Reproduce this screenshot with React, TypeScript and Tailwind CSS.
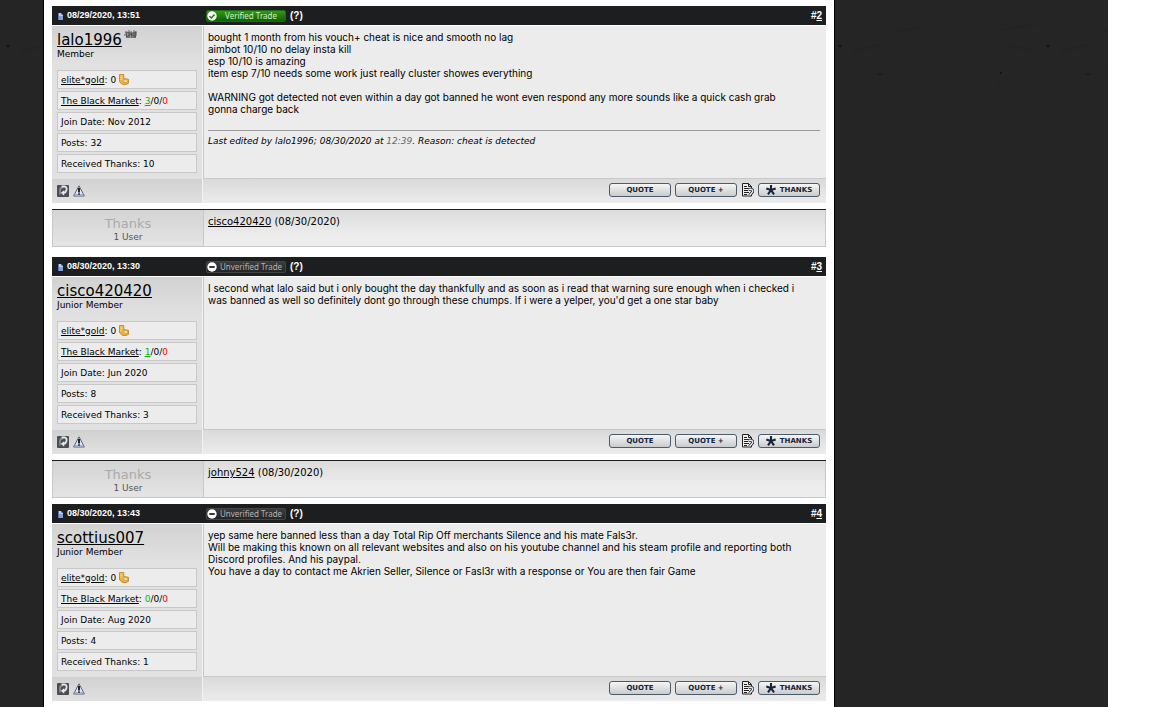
import React from 'react'

type Post = {
  id: number
  date: string
  verified: boolean
  user: string
  rank: string
  crowd?: boolean
  market: [number, number, number]
  joined: string
  posts: number
  received: number
  body: React.ReactNode
  thanks?: string
}

const posts: Post[] = [
  {
    id: 2,
    date: '08/29/2020, 13:51',
    verified: true,
    user: 'lalo1996',
    rank: 'Member',
    crowd: true,
    market: [3, 0, 0],
    joined: 'Nov 2012',
    posts: 32,
    received: 10,
    thanks: 'cisco420420',
    body: (
      <>
        <p>bought 1 month from his vouch+ cheat is nice and smooth no lag</p>
        <p>aimbot 10/10 no delay insta kill</p>
        <p>esp 10/10 is amazing</p>
        <p>item esp 7/10 needs some work just really cluster showes everything</p>
        <p className="mt-3">
          WARNING got detected not even within a day got banned he wont even respond any more sounds like a quick cash
          grab
          <br />
          gonna charge back
        </p>
        <hr className="mt-[15px] mb-1 border-[#999]" />
        <p className="font-['DejaVu_Sans',Verdana,sans-serif] text-[9px] italic">
          Last edited by lalo1996; 08/30/2020 at <span className="text-[#666]">12:39</span>. Reason: cheat is detected
        </p>
      </>
    ),
  },
  {
    id: 3,
    date: '08/30/2020, 13:30',
    verified: false,
    user: 'cisco420420',
    rank: 'Junior Member',
    market: [1, 0, 0],
    joined: 'Jun 2020',
    posts: 8,
    received: 3,
    thanks: 'johny524',
    body: (
      <p>
        I second what lalo said but i only bought the day thankfully and as soon as i read that warning sure enough when
        i checked i
        <br />
        was banned as well so definitely dont go through these chumps. If i were a yelper, you'd get a one star baby
      </p>
    ),
  },
  {
    id: 4,
    date: '08/30/2020, 13:43',
    verified: false,
    user: 'scottius007',
    rank: 'Junior Member',
    market: [0, 0, 0],
    joined: 'Aug 2020',
    posts: 4,
    received: 1,
    body: (
      <>
        <p>yep same here banned less than a day Total Rip Off merchants Silence and his mate Fals3r.</p>
        <p>
          Will be making this known on all relevant websites and also on his youtube channel and his steam profile and
          reporting both
          <br />
          Discord profiles. And his paypal.
        </p>
        <p>You have a day to contact me Akrien Seller, Silence or Fasl3r with a response or You are then fair Game</p>
      </>
    ),
  },
]

const PageIcon = () => (
  <svg width="5" height="7" viewBox="0 0 5 7" className="mt-0.5">
    <path d="M0 0h3l2 2v5H0z" fill="#7f9fd8" />
    <path d="M0 0h3v2h2v1H0z" fill="#b9cdf3" />
    <path d="M0 0h1v7H0z" fill="#5d78b4" />
  </svg>
)

const CoinsIcon = () => (
  <svg width="10" height="11" viewBox="0 0 10 11">
    <path d="M.5.5h4.300v4L9.500 5.300V9.300L7 10.500H3.500L.5 7.800z" fill="#eab140" stroke="#c08a2c" strokeWidth=".9" />
    <path d="M1.200 2h2.500M1.200 3.700h2.500M1.200 5.400h2" stroke="#fbe09a" strokeWidth=".8" />
    <path d="M4.800 5.500h3.600v3H4.800z" fill="#fbdf92" stroke="#c08a2c" strokeWidth=".5" />
  </svg>
)

const CrowdIcon = () => (
  <svg width="14" height="9" viewBox="0 0 14 9" className="ml-0.5">
    <path
      d="M1 3h12M0 5h13M2 7h10M2 1l1 7M5 0v8M7 1l1 7M10 0v8M12 1l-1 7M3 2l9 5M2 7l10-5"
      stroke="#4d4d4d"
      strokeWidth=".9"
      fill="none"
    />
  </svg>
)

const ReputationIcon = () => (
  <svg width="12" height="12" viewBox="0 0 12 12">
    <rect width="12" height="12" rx="1" fill="#4b4f55" />
    <path d="M3 9.500V5Q3 2.500 6 2.500" fill="none" stroke="#8d9399" strokeWidth="1.600" />
    <path d="M4.500 1.500H8Q10 2 9.500 5 9 7.500 6.500 8" fill="none" stroke="#e6e9ec" strokeWidth="1.800" />
    <path d="M7.200 5.200 3.800 7.800 7.200 10.800z" fill="#e6e9ec" />
  </svg>
)

const ReportIcon = () => (
  <svg width="12" height="12" viewBox="0 0 12 12">
    <path d="M6 .8 11.400 11H.6z" fill="#dce7f7" stroke="#59616f" strokeWidth="1" strokeLinejoin="round" />
    <path d="M2 9h8l.8 1.600H1.200z" fill="#9db6dc" />
    <path d="M6 3v4.500" stroke="#111" strokeWidth="1.800" />
    <path d="M5.200 8.300h1.600v1.400H5.200z" fill="#111" />
  </svg>
)

const MultiQuoteIcon = () => (
  <svg width="12" height="14" viewBox="0 0 12 14">
    <path d="M.5.5h6l3 3v9.500h-9z" fill="#eee" stroke="#222" />
    <path d="M6.500.5v3h3" fill="none" stroke="#222" />
    <path d="M2 3.500h3M2 5.500h5M2 7.500h4M2 9.500h5M2 11.500h3" stroke="#222" />
    <path d="M6.500 6.500c4-1 5 1.500 3.500 3L7.500 12.500" fill="none" stroke="#222" strokeWidth="3" />
    <path d="M6.500 6.500c4-1 5 1.500 3.500 3L7.500 12.500" fill="none" stroke="#e4e8f0" strokeWidth="1.400" />
  </svg>
)

const StarIcon = () => (
  <svg width="10" height="10" viewBox="0 0 10 10">
    <path d="M5 5V0M5 5 .3 3.500M5 5l4.700-1.500M5 5 2 9.300M5 5l3 4.300" stroke="#15243a" strokeWidth="2.100" />
  </svg>
)

const TradeBadge = ({ verified }: { verified: boolean }) => (
  <span
    className={
      verified
        ? 'flex h-3 w-20 items-center rounded-xs border border-[#1c6d0c] bg-linear-to-b from-[#2f9a15] to-[#0f6200] text-[#d3eccb]'
        : 'flex h-3 w-20 items-center rounded-xs border border-[#444] bg-linear-to-b from-[#393b3c] to-[#242526] text-[#b5b5b5]'
    }
  >
    <svg width="10" height="10" viewBox="0 0 10 10">
      <circle cx="5" cy="5" r="4.700" fill="#fff" />
      {verified ? (
        <path d="M2.500 5.200 4.300 7l3.200-3.600" fill="none" stroke="#1d7d0a" strokeWidth="1.500" />
      ) : (
        <path d="M2.300 5h5.400" stroke="#222" strokeWidth="1.800" />
      )}
    </svg>
    <span className="flex-1 text-center font-['Noto_Sans',sans-serif] text-[8px] leading-[10px] font-normal whitespace-nowrap">
      {verified ? 'Verified Trade' : 'Unverified Trade'}
    </span>
  </span>
)

const InfoRow = ({ children }: { children: React.ReactNode }) => (
  <li className="flex h-[19px] items-center border border-[#c8c8c8] bg-[#ececec] px-[3px] whitespace-pre">{children}</li>
)

const ActionButton = ({ children }: { children: React.ReactNode }) => (
  <button className="flex h-3.5 w-[62px] items-center justify-center gap-1 rounded-[3px] border border-[#4a5b6b] bg-linear-to-b from-[#f6f6f6] to-[#c9cbcd] text-[7px] leading-none font-bold text-[#15243a]">
    {children}
  </button>
)

const PostCard = ({ post }: { post: Post }) => (
  <article>
    {/* Title bar */}
    <header className="grid h-[19px] grid-cols-[150px_1fr] items-center bg-[#1c1e20] font-['Liberation_Sans',Arial,sans-serif] text-[9px] font-bold text-white">
      <span className="flex items-center gap-1 pl-1.5">
        <PageIcon />
        {post.date}
      </span>
      <span className="flex items-center gap-1 pr-1 pl-1">
        <TradeBadge verified={post.verified} />
        <a href="#help" className="text-[10px]">(?)</a>
        <span className="ml-auto text-[10px]">
          #<a href={'#post' + post.id} className="underline">{post.id}</a>
        </span>
      </span>
    </header>

    {/* Author and message */}
    <div className="mt-px grid min-h-[153px] grid-cols-[150px_1fr] gap-px bg-[#f2f2f2]">
      <div className="bg-linear-to-b from-[#d2d2d2] to-[#e1e1e1] to-25% px-[5px] text-[9px] leading-3">
        <div className="flex h-[22px] items-start pt-1">
          <a href={'#' + post.user} className="text-[15px] leading-5 underline">{post.user}</a>
          {post.crowd && <CrowdIcon />}
        </div>
        <div>{post.rank}</div>
        <ul className="mt-2.5 flex flex-col gap-0.5">
          <InfoRow>
            <a href="#elite" className="underline">elite*gold</a>: 0 <CoinsIcon />
          </InfoRow>
          <InfoRow>
            <a href="#market" className="underline">The Black Market</a>:{' '}
            <span className={post.market[0] > 0 ? 'text-[#00bb00] underline' : 'text-[#00bb00]'}>{post.market[0]}</span>
            /{post.market[1]}/<span className="text-[#ff0000]">{post.market[2]}</span>
          </InfoRow>
          <InfoRow>Join Date: {post.joined}</InfoRow>
          <InfoRow>Posts: {post.posts}</InfoRow>
          <InfoRow>Received Thanks: {post.received}</InfoRow>
        </ul>
      </div>
      <div className="border-b border-l border-[#c8c8c8] bg-[#ececec] px-1 pt-[5px] pr-1.5 font-[Inter,'DejaVu_Sans',sans-serif] text-[10px] leading-3">
        {post.body}
      </div>
    </div>

    {/* Actions */}
    <footer className="grid h-6 grid-cols-[150px_1fr] gap-px bg-[#f2f2f2]">
      <div className="flex items-center gap-1 bg-linear-to-b from-[#d1d1d1] to-[#e1e1e1] px-[5px]">
        <a href="#reputation" aria-label="Reputation"><ReputationIcon /></a>
        <a href="#report" aria-label="Report"><ReportIcon /></a>
      </div>
      <div className="flex items-start justify-end gap-1 bg-linear-to-b from-[#dadada] to-[#ececec] pt-1 pr-1.5">
        <ActionButton>QUOTE</ActionButton>
        <ActionButton>QUOTE +</ActionButton>
        <button aria-label="Multi-quote" className="ml-px"><MultiQuoteIcon /></button>
        <ActionButton>
          <StarIcon /> THANKS
        </ActionButton>
      </div>
    </footer>
  </article>
)

const ThanksBox = ({ user }: { user: string }) => (
  <section className="mt-1.5 border-t border-[#1c1e20]">
    <div className="grid h-[37px] grid-cols-[151px_1fr] border-x border-b border-[#c8c8c8]">
      <div className="border-r border-[#c8c8c8] bg-linear-to-b from-[#d4d4d4] to-[#e4e4e4] pt-1.5 text-center">
        <div className="text-[13px] leading-4 text-[#aaa]">Thanks</div>
        <div className="text-[9px] leading-[10px] text-[#555]">1 User</div>
      </div>
      <div className="bg-linear-to-b from-[#dcdcdc] to-[#ededed] to-70% px-1 pt-1.5 text-[10px] leading-3">
        <a href={'#' + user} className="underline">{user}</a> (08/30/2020)
      </div>
    </div>
  </section>
)

// faint specks that repeat across the dark page
const Grunge = () => (
  <svg className="absolute inset-x-0 top-0 h-30 w-full">
    <defs>
      <pattern id="grunge" width="208" height="120" patternUnits="userSpaceOnUse">
        <circle cx="8" cy="46" r="1.500" fill="#141414" />
        <circle cx="169" cy="73" r="1.200" fill="#141414" />
        <ellipse cx="48" cy="74" rx="3" ry="1" fill="#1d1d1d" />
        <circle cx="67" cy="72" r="1" fill="#1e1e1e" />
        <path d="M60 32l30-5M170 30l35-6M175 45l28 6M20 52l30-8M165 82l4 4" stroke="#232323" strokeWidth="3" />
      </pattern>
    </defs>
    <rect width="100%" height="120" fill="url(#grunge)" />
  </svg>
)

const App = () => {
  return (
    <div className="min-h-screen bg-white pr-11 font-['DejaVu_Sans',Verdana,sans-serif] text-black">
      <div className="relative min-h-screen bg-[#252525] pl-[43px]">
        <Grunge />
        <main className="relative min-h-screen w-full max-w-[792px] border-x border-black bg-white px-2 pt-1.5 pb-1.5">
          {posts.map((post, i) => (
            <div key={post.id} className={i === 1 ? 'mt-2.5' : i === 2 ? 'mt-1.5' : ''}>
              <PostCard post={post} />
              {post.thanks && <ThanksBox user={post.thanks} />}
            </div>
          ))}
        </main>
      </div>
    </div>
  )
}

export default App
